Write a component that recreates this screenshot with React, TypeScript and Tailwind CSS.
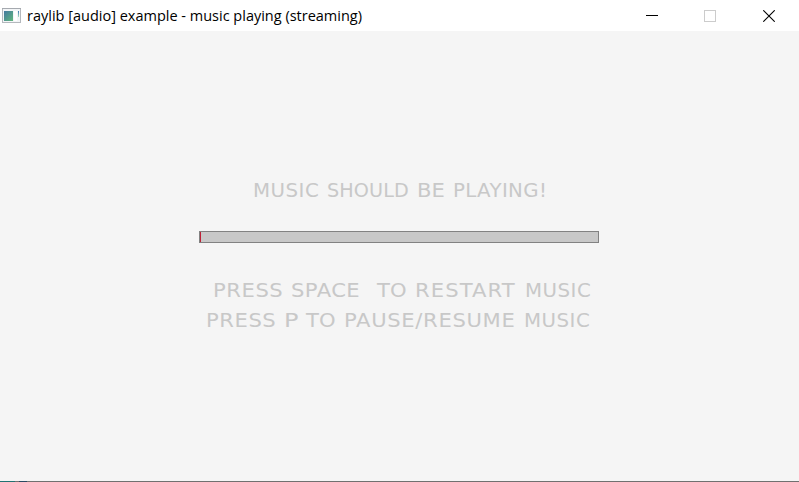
type Word = { text: string; style: string };

const playing: Word[] = [
  { text: "MUSIC", style: "w-[74px] scale-x-103 tracking-[0.5px]" },
  { text: "SHOULD", style: "w-[90px] tracking-[0.1px]" },
  { text: "BE", style: "w-[36px] scale-x-110" },
  { text: "PLAYING!", style: "w-[96px] scale-x-103 tracking-[0.35px]" },
];
const restart: Word[] = [
  { text: "PRESS", style: "w-[78px] scale-x-110 tracking-[0.5px]" },
  { text: "SPACE", style: "w-[86px] scale-x-110 tracking-[0.4px]" },
  { text: "TO", style: "w-[38px] scale-x-110" },
  { text: "RESTART", style: "w-[110px] scale-x-110 tracking-[1px]" },
  { text: "MUSIC", style: "w-[68px] scale-x-103 tracking-[0.5px]" },
];
const pause: Word[] = [
  { text: "PRESS", style: "w-[78px] scale-x-110 tracking-[0.5px]" },
  { text: "P", style: "w-[22px] scale-x-125" },
  { text: "TO", style: "w-[38px] scale-x-110" },
  { text: "PAUSE/RESUME", style: "w-[180px] scale-x-110 tracking-[0.6px]" },
  { text: "MUSIC", style: "w-[68px] scale-x-103 tracking-[0.5px]" },
];

function Line({ words, className }: { words: Word[]; className: string }) {
  return (
    <p className={`flex h-5 whitespace-nowrap font-['DejaVu_Sans',sans-serif] text-[19.2px] leading-5 text-[#c8c8c8] ${className}`}>
      {words.map((w, i) => (
        <span key={i} className={`shrink-0 origin-left ${w.style}`}>{w.text}</span>
      ))}
    </p>
  );
}

function AppIcon() {
  return (
    <svg width="19" height="15" viewBox="0 0 19 15" className="shrink-0" shapeRendering="crispEdges">
      <defs>
        <linearGradient id="screen" x1="0" y1="0" x2="1" y2="1">
          <stop offset="0" stopColor="#4378a0" />
          <stop offset="1" stopColor="#60b77c" />
        </linearGradient>
        <linearGradient id="strip" x1="0" y1="0" x2="0" y2="1">
          <stop offset="0" stopColor="#3e76b5" />
          <stop offset="1" stopColor="#a9dfbc" />
        </linearGradient>
      </defs>
      <rect x="0.5" y="0.5" width="18" height="14" fill="#f3f5f7" stroke="#b4b8bd" />
      <rect x="0" y="0" width="19" height="1" fill="#a5a9af" />
      <rect x="2" y="3" width="9" height="10" fill="url(#screen)" />
      <rect x="12" y="3" width="3" height="10" fill="#fff" />
      <rect x="16" y="3" width="1" height="6" fill="url(#strip)" />
    </svg>
  );
}

export default function App() {
  return (
    <div className="flex h-[482px] w-[799px] flex-col overflow-hidden bg-[#f5f5f5]">
      <header className="flex h-[31px] shrink-0 items-center bg-white pl-[2px]">
        <AppIcon />
        <h1 className="ml-[6px] whitespace-nowrap font-['Open_Sans',sans-serif] text-[14.5px] leading-5 text-black">
          raylib [audio] example - music playing (streaming)
        </h1>
        <div className="ml-auto flex items-center pr-6">
          <svg width="12" height="12" viewBox="0 0 12 12" shapeRendering="crispEdges" className="mr-[46px]">
            <path d="M0 5.5H12" stroke="#000" />
          </svg>
          <svg width="12" height="12" viewBox="0 0 12 12" shapeRendering="crispEdges" className="mr-[47px]">
            <rect x="0.5" y="0.5" width="11" height="11" fill="none" stroke="#ccc" />
          </svg>
          <svg width="12" height="12" viewBox="0 0 12 12">
            <path d="M0.3 0.3L11.7 11.7M11.7 0.3L0.3 11.7" stroke="#000" strokeWidth="1.1" />
          </svg>
        </div>
      </header>
      <main className="flex h-[450px] shrink-0 flex-col pt-[150px]">
        <Line words={playing} className="ml-[253px]" />
        <div className="ml-[199px] mt-[30px] h-3 w-[400px] border border-[#828282] bg-[#c8c8c8]">
          <div className="h-full w-px bg-[#be2137]" />
        </div>
        <Line words={restart} className="ml-[213px] mt-[38px]" />
        <Line words={pause} className="ml-[206px] mt-[10px]" />
      </main>
      <footer className="flex h-px shrink-0 bg-[#707070]">
        <div className="w-[15px] bg-[#217272]" />
        <div className="ml-1 w-2 bg-[#294a62]" />
      </footer>
    </div>
  );
}
